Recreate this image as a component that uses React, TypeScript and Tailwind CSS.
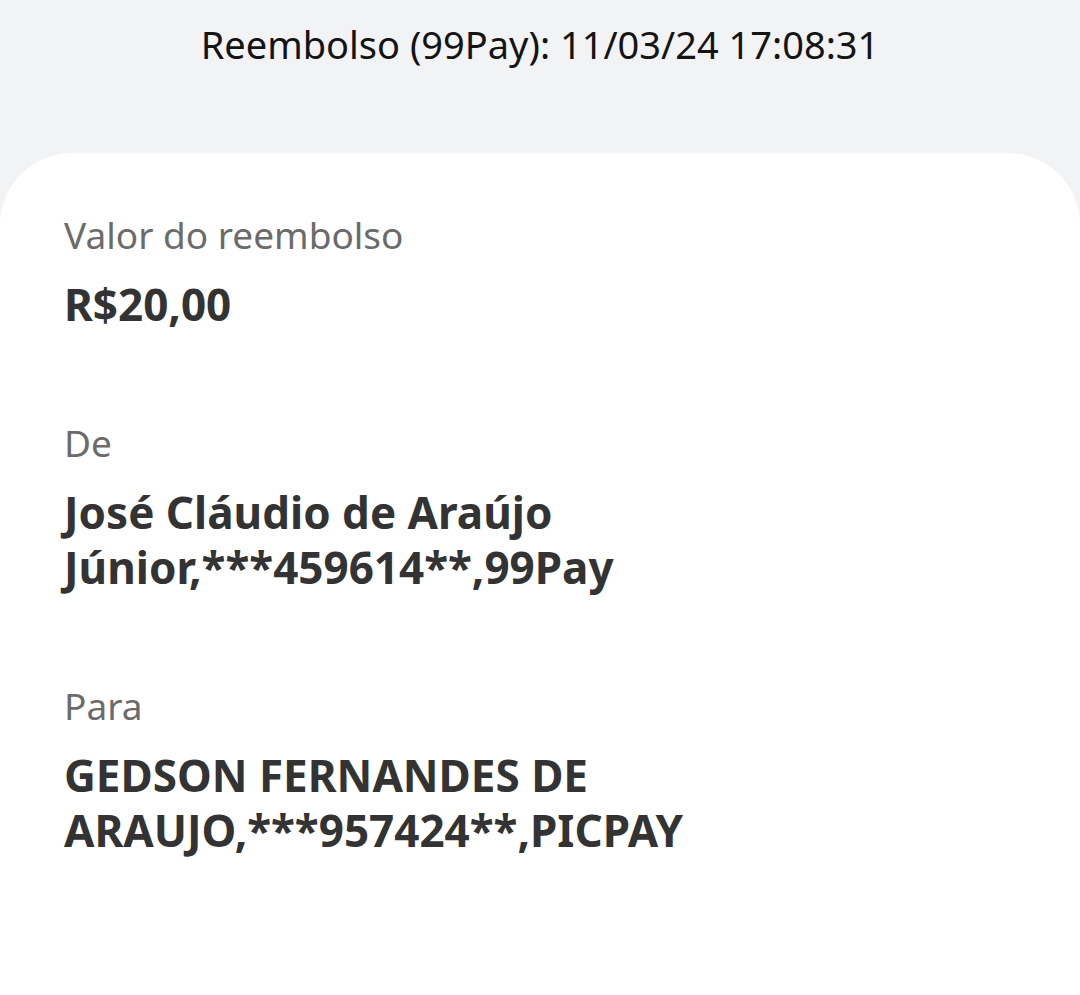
import React from 'react';

interface Field {
    label: string;
    lines: string[];
}

const fields: Field[] = [
    { label: 'Valor do reembolso', lines: ['R$20,00'] },
    { label: 'De', lines: ['José Cláudio de Araújo', 'Júnior,***459614**,99Pay'] },
    { label: 'Para', lines: ['GEDSON FERNANDES DE', 'ARAUJO,***957424**,PICPAY'] },
];

const App = () => {
    return (
        <div className="min-h-[995px] bg-[#f2f3f5] font-['Noto_Sans',sans-serif] overflow-hidden">
            <div className="h-[153px] pt-[16px] text-center text-[38px] leading-[56px] text-[#141414]">
                Reembolso (99Pay): 11/03/24 17:08:31
            </div>
            <div className="bg-white rounded-t-[72px] min-h-[842px] px-[64px] pt-[54px]">
                {fields.map((field) => (
                    <div key={field.label} className="mb-[83px]">
                        <div className="text-[37px] leading-[56px] text-[#6b6b6b]">{field.label}</div>
                        <div className="mt-[14px] text-[44px] leading-[55px] font-bold text-[#333333]">
                            {field.lines.map((line) => (
                                <div key={line}>{line}</div>
                            ))}
                        </div>
                    </div>
                ))}
            </div>
        </div>
    );
};

export default App;
